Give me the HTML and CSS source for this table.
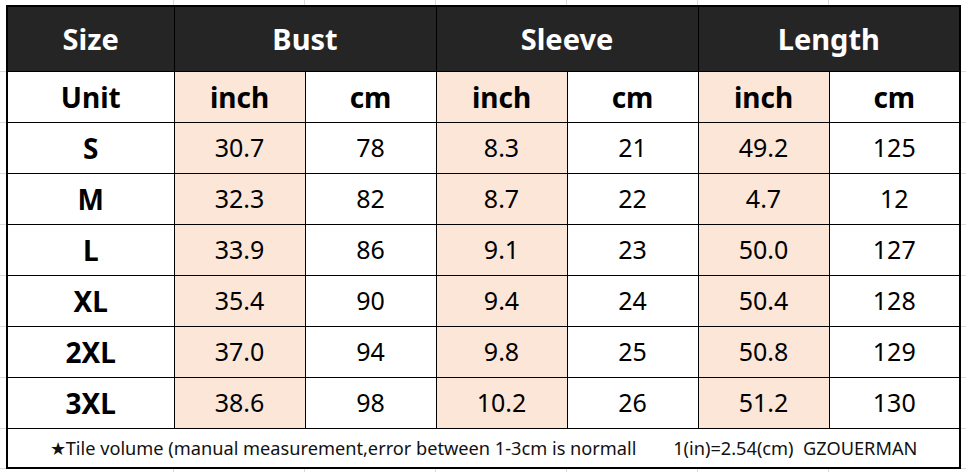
FILE: index.html
```html
<!DOCTYPE html>
<html lang="en">
<head>
  <meta charset="UTF-8">
  <title>Size Chart</title>
  <link rel="stylesheet" href="styles.css">
</head>
<body>
  <table class="chart">
    <colgroup>
      <col class="c-size">
      <col class="c-val"><col class="c-val">
      <col class="c-val"><col class="c-val">
      <col class="c-val"><col class="c-val">
    </colgroup>
    <thead>
      <tr class="head">
        <th>Size</th>
        <th colspan="2">Bust</th>
        <th colspan="2">Sleeve</th>
        <th colspan="2">Length</th>
      </tr>
    </thead>
    <tbody>
      <tr class="unit">
        <th class="edge">Unit</th>
        <th class="in">inch</th><th>cm</th>
        <th class="in">inch</th><th>cm</th>
        <th class="in">inch</th><th>cm</th>
      </tr>
      <tr>
        <th class="edge">S</th>
        <td class="in">30.7</td><td>78</td>
        <td class="in">8.3</td><td>21</td>
        <td class="in">49.2</td><td>125</td>
      </tr>
      <tr>
        <th class="edge">M</th>
        <td class="in">32.3</td><td>82</td>
        <td class="in">8.7</td><td>22</td>
        <td class="in">4.7</td><td>12</td>
      </tr>
      <tr>
        <th class="edge thick-bottom">L</th>
        <td class="in">33.9</td><td>86</td>
        <td class="in">9.1</td><td>23</td>
        <td class="in">50.0</td><td>127</td>
      </tr>
      <tr>
        <th class="edge">XL</th>
        <td class="in">35.4</td><td>90</td>
        <td class="in">9.4</td><td>24</td>
        <td class="in">50.4</td><td>128</td>
      </tr>
      <tr>
        <th>2XL</th>
        <td class="in">37.0</td><td>94</td>
        <td class="in">9.8</td><td>25</td>
        <td class="in">50.8</td><td>129</td>
      </tr>
      <tr>
        <th>3XL</th>
        <td class="in">38.6</td><td>98</td>
        <td class="in">10.2</td><td>26</td>
        <td class="in">51.2</td><td>130</td>
      </tr>
      <tr class="note">
        <td colspan="7">
          <span>★Tile volume (manual measurement,error between 1-3cm is normall</span>
          <span class="conv">1(in)=2.54(cm)&nbsp;&nbsp;GZOUERMAN</span>
        </td>
      </tr>
    </tbody>
  </table>
</body>
</html>
```

FILE: styles.css
```css
* { margin: 0; padding: 0; box-sizing: border-box; }

html, body {
  height: 100%;
}

/* spreadsheet gridlines peeking out round the table */
body {
  background:
    linear-gradient(#dadada, #dadada) 0 71px / 100% 1px no-repeat,
    linear-gradient(#dadada, #dadada) 0 468px / 100% 1px no-repeat,
    repeating-linear-gradient(#dadada 0 1px, transparent 1px 51px) 0 122px / 100% 307px no-repeat,
    repeating-linear-gradient(to right, #dadada 0 1px, transparent 1px 131px) 173px 0 / 656px 100% no-repeat,
    #fff;
  font-family: "Noto Sans", "Open Sans", sans-serif;
  color: #000;
  overflow: hidden;
}

.chart {
  border-collapse: collapse;
  table-layout: fixed;
  width: 954px;
  margin: 5px 0 0 6px;
  border: 2px solid #000;
  background: #fff;
}

.c-size { width: 167px; }
.c-val  { width: 131px; }

.chart th,
.chart td {
  border: 1px solid #000;
  text-align: center;
  vertical-align: middle;
  height: 51px;
  font-size: 25px;
  line-height: 1;
}

.chart th { font-weight: 700; font-size: 28px; }
.chart td { font-weight: 400; }

.head th {
  height: 65px;
  background: #252525;
  color: #fff;
  font-size: 29px;
}

.in { background: #fbe6d8; }

.edge { border-left: 2px solid #000; }
.thick-bottom { border-bottom: 2px solid #000; }

.note td {
  height: 40px;
  font-size: 18.2px;
  color: #111;
  white-space: nowrap;
}
.note .conv { margin-left: 32px; }
```
